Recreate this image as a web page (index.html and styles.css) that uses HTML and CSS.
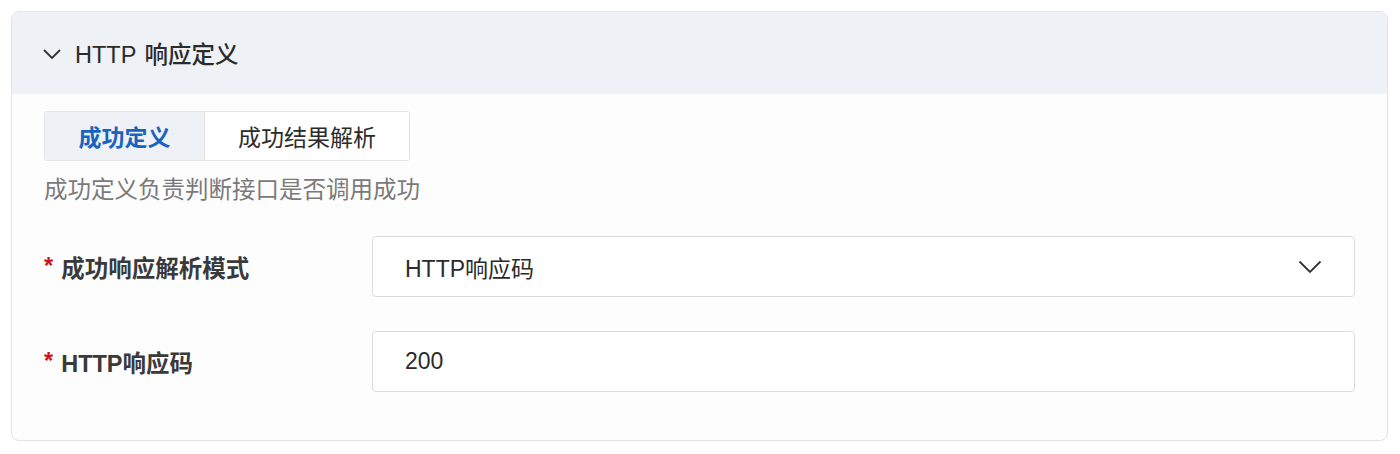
FILE: index.html
```html
<!DOCTYPE html>
<html lang="zh">
<head>
<meta charset="utf-8">
<link rel="stylesheet" href="styles.css">
</head>
<body>
<div class="card">
  <div class="card-header">
    <svg class="hdr-chevron" width="18" height="12" viewBox="0 0 18 12"><path d="M1 2 L9 10 L17 2" fill="none" stroke="#333" stroke-width="1.8"/></svg>
    <span class="hdr-title">HTTP 响应定义</span>
  </div>
  <div class="card-body">
    <div class="tabs">
      <div class="tab active">成功定义</div>
      <div class="tab">成功结果解析</div>
    </div>
    <div class="desc">成功定义负责判断接口是否调用成功</div>
    <div class="form-row first">
      <div class="label"><span class="req">*</span>成功响应解析模式</div>
      <div class="field select">
        <span>HTTP响应码</span>
        <svg class="sel-chevron" width="24" height="14" viewBox="0 0 24 14"><path d="M1.5 1.5 L12 12 L22.5 1.5" fill="none" stroke="#333" stroke-width="1.8"/></svg>
      </div>
    </div>
    <div class="form-row">
      <div class="label"><span class="req">*</span>HTTP响应码</div>
      <div class="field"><span>200</span></div>
    </div>
  </div>
</div>
</body>
</html>
```
FILE: styles.css
```css
html, body {
  margin: 0;
  padding: 0;
  background: #ffffff;
}
body {
  padding: 11px 12px 0 11px;
  font-family: "Liberation Sans", "Noto Sans CJK SC", sans-serif;
  color: #333;
}
.card {
  width: 1377px;
  height: 430px;
  border: 1px solid #e2e4e7;
  border-radius: 8px;
  background: #fdfdfd;
  overflow: hidden;
  box-sizing: border-box;
}
.card-header {
  height: 82px;
  background: #eef1f5;
  display: flex;
  align-items: center;
  padding-left: 31px;
}
.hdr-chevron {
  margin-right: 14px;
  margin-top: 1px;
}
.hdr-title {
  font-size: 23.5px;
  font-weight: 500;
  color: #2b2b2b;
  word-spacing: 2px;
}
.card-body {
  padding: 17px 32px 0 32px;
}
.tabs {
  display: flex;
  width: 366px;
  height: 50px;
  border: 1px solid #e1e3e6;
  border-radius: 3px;
  box-sizing: border-box;
  overflow: hidden;
}
.tab {
  display: flex;
  align-items: center;
  justify-content: center;
  font-size: 23px;
  color: #2b2b2b;
  background: #fff;
  flex: 1 1 auto;
}
.tab.active {
  flex: 0 0 159px;
  background: #eef1f5;
  color: #1a64bd;
  font-weight: 700;
  border-right: 1px solid #e1e3e6;
}
.desc {
  margin-top: 13px;
  font-size: 23.5px;
  color: #7a7a7a;
  line-height: 32px;
}
.form-row {
  display: flex;
  align-items: center;
  margin-top: 34px;
}
.form-row.first {
  margin-top: 30px;
}
.label {
  width: 328px;
  flex: 0 0 328px;
  font-size: 23.5px;
  font-weight: 600;
  color: #3a3a3a;
  display: flex;
  align-items: center;
}
.req {
  color: #d0121b;
  margin-right: 8px;
  font-weight: 700;
}
.field {
  flex: 1 1 auto;
  height: 61px;
  border: 1px solid #dcdcdc;
  border-radius: 4px;
  background: #fff;
  box-sizing: border-box;
  display: flex;
  align-items: center;
  padding-left: 32px;
  padding-right: 32px;
  font-size: 23px;
  color: #2b2b2b;
}
.select {
  justify-content: space-between;
}
```
